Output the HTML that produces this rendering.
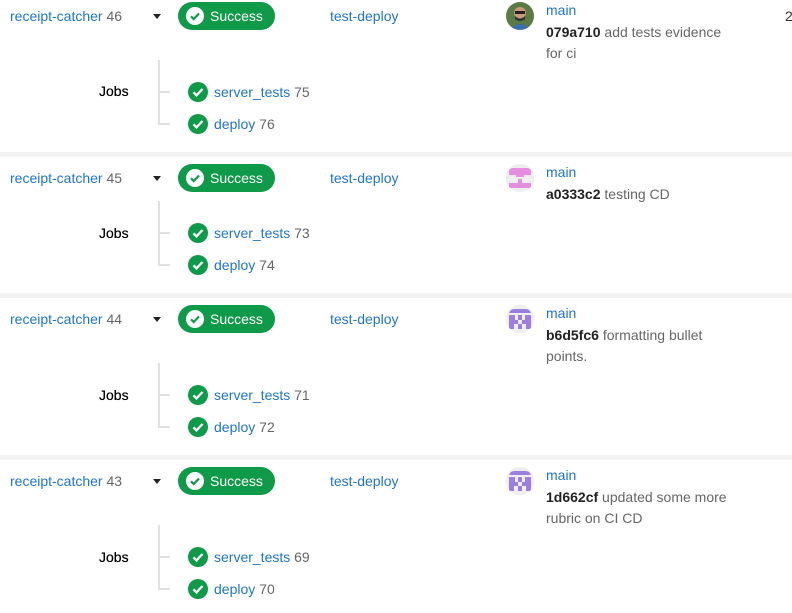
<!DOCTYPE html>
<html><head><meta charset="utf-8"><style>
*{margin:0;padding:0;box-sizing:border-box}
body{width:792px;height:613px;overflow:hidden;background:#fff;font-family:"Liberation Sans",Arial,sans-serif;font-size:14px;color:#333;position:relative}
.a{position:absolute;white-space:nowrap;line-height:18px}
.l{color:#1f75cb}
.g{color:#666}
.sep{position:absolute;left:0;width:792px;height:5px;background:#f2f2f2}
.pill{position:absolute;left:178px;width:97px;height:28px;border-radius:14px;background:#0f9a4a;color:#fff;font-size:14px;line-height:28px;padding-left:32px}
.pill svg{position:absolute;left:8px;top:5px}
.vl{position:absolute;left:158px;width:2px;background:#e0e0e0}
.hl{position:absolute;left:158px;width:12px;height:2px;background:#e0e0e0}
.ji{position:absolute;left:188px}
.av{position:absolute;left:506px;width:28px;height:28px;border-radius:50%;overflow:hidden;background:#eee}
.b{color:#222;font-weight:bold}
.car{position:absolute;left:153px;width:0;height:0;border-left:4.5px solid transparent;border-right:4.5px solid transparent;border-top:5px solid #222}
.jobs{color:#000;text-shadow:0 0 0.4px #000}
</style></head><body>

<div class="a" style="left:785px;top:7px;color:#333">2</div>

<div class="a" style="left:10px;top:7px"><span class="l">receipt-catcher</span> <span class="g">46</span></div>
<div class="car" style="top:14px"></div>
<div class="pill" style="top:2px"><svg width="18" height="18" viewBox="0 0 18 18"><circle cx="9" cy="9" r="9" fill="#fff"/><path d="M5 9.3l2.7 2.7L13 6.5" stroke="#0f9a4a" stroke-width="2.2" fill="none"/></svg>Success</div>
<div class="a l" style="left:330px;top:7px">test-deploy</div>
<div class="av" style="top:2px"><svg width="28" height="28"><rect width="28" height="28" fill="#5b7a45"/><circle cx="14" cy="11" r="6" fill="#c99a7a"/><rect x="9" y="9" width="10" height="3" fill="#222"/><path d="M4 28q10-12 20 0z" fill="#3a6fb0"/><path d="M9 14q5 5 10 0v3q-5 4-10 0z" fill="#333"/></svg></div>
<div class="a l" style="left:546px;top:1px">main</div>
<div class="a" style="left:546px;top:23px"><span class="b">079a710</span> <span class="g">add tests evidence</span></div>
<div class="a g" style="left:546px;top:44px">for ci</div>
<div class="a jobs" style="left:99px;top:82px">Jobs</div>
<div class="vl" style="top:60px;height:65px"></div>
<div class="hl" style="top:91px"></div><div class="hl" style="top:123px"></div>
<svg class="ji" style="top:82px" width="20" height="20"><circle cx="10" cy="10" r="10" fill="#0f9a4a"/><path d="M5.5 10.3l3 3L14.5 7" stroke="#fff" stroke-width="2.3" fill="none"/></svg>
<div class="a" style="left:214px;top:83px"><span class="l">server_tests</span> <span class="g">75</span></div>
<svg class="ji" style="top:114px" width="20" height="20"><circle cx="10" cy="10" r="10" fill="#0f9a4a"/><path d="M5.5 10.3l3 3L14.5 7" stroke="#fff" stroke-width="2.3" fill="none"/></svg>
<div class="a" style="left:214px;top:115px"><span class="l">deploy</span> <span class="g">76</span></div>

<div class="sep" style="top:152px"></div>

<div class="a" style="left:10px;top:169px"><span class="l">receipt-catcher</span> <span class="g">45</span></div>
<div class="car" style="top:176px"></div>
<div class="pill" style="top:164px"><svg width="18" height="18" viewBox="0 0 18 18"><circle cx="9" cy="9" r="9" fill="#fff"/><path d="M5 9.3l2.7 2.7L13 6.5" stroke="#0f9a4a" stroke-width="2.2" fill="none"/></svg>Success</div>
<div class="a l" style="left:330px;top:169px">test-deploy</div>
<div class="av" style="top:164px"><svg width="28" height="28"><rect width="28" height="28" fill="#eee"/><path d="M3 11v-3q0-4 4-4h14q4 0 4 4v3z" fill="#e58de0"/><rect x="10" y="11" width="8" height="2" fill="#e58de0"/><rect x="12" y="15" width="4" height="4" fill="#e58de0"/><rect x="3" y="19" width="22" height="5" fill="#e58de0"/></svg></div>
<div class="a l" style="left:546px;top:163px">main</div>
<div class="a" style="left:546px;top:185px"><span class="b">a0333c2</span> <span class="g">testing CD</span></div>
<div class="a jobs" style="left:99px;top:224px">Jobs</div>
<div class="vl" style="top:201px;height:64px"></div>
<div class="hl" style="top:232px"></div><div class="hl" style="top:264px"></div>
<svg class="ji" style="top:223px" width="20" height="20"><circle cx="10" cy="10" r="10" fill="#0f9a4a"/><path d="M5.5 10.3l3 3L14.5 7" stroke="#fff" stroke-width="2.3" fill="none"/></svg>
<div class="a" style="left:214px;top:224px"><span class="l">server_tests</span> <span class="g">73</span></div>
<svg class="ji" style="top:255px" width="20" height="20"><circle cx="10" cy="10" r="10" fill="#0f9a4a"/><path d="M5.5 10.3l3 3L14.5 7" stroke="#fff" stroke-width="2.3" fill="none"/></svg>
<div class="a" style="left:214px;top:256px"><span class="l">deploy</span> <span class="g">74</span></div>

<div class="sep" style="top:293px"></div>

<div class="a" style="left:10px;top:310px"><span class="l">receipt-catcher</span> <span class="g">44</span></div>
<div class="car" style="top:317px"></div>
<div class="pill" style="top:305px"><svg width="18" height="18" viewBox="0 0 18 18"><circle cx="9" cy="9" r="9" fill="#fff"/><path d="M5 9.3l2.7 2.7L13 6.5" stroke="#0f9a4a" stroke-width="2.2" fill="none"/></svg>Success</div>
<div class="a l" style="left:330px;top:310px">test-deploy</div>
<div class="av" style="top:305px"><svg width="28" height="28"><rect width="28" height="28" fill="#eee"/><path d="M3 24v-14q0-6 6-6h10q6 0 6 6v14z" fill="#9b7ee0"/><rect x="3" y="8" width="22" height="2" fill="#eee"/><rect x="9" y="10" width="3" height="5" fill="#eee"/><rect x="16" y="10" width="3" height="5" fill="#eee"/><rect x="12" y="15" width="4" height="4" fill="#eee"/><rect x="8" y="19" width="4" height="5" fill="#eee"/><rect x="16" y="19" width="4" height="5" fill="#eee"/></svg></div>
<div class="a l" style="left:546px;top:304px">main</div>
<div class="a" style="left:546px;top:326px"><span class="b">b6d5fc6</span> <span class="g">formatting bullet</span></div>
<div class="a g" style="left:546px;top:347px">points.</div>
<div class="a jobs" style="left:99px;top:386px">Jobs</div>
<div class="vl" style="top:363px;height:65px"></div>
<div class="hl" style="top:394px"></div><div class="hl" style="top:426px"></div>
<svg class="ji" style="top:385px" width="20" height="20"><circle cx="10" cy="10" r="10" fill="#0f9a4a"/><path d="M5.5 10.3l3 3L14.5 7" stroke="#fff" stroke-width="2.3" fill="none"/></svg>
<div class="a" style="left:214px;top:386px"><span class="l">server_tests</span> <span class="g">71</span></div>
<svg class="ji" style="top:417px" width="20" height="20"><circle cx="10" cy="10" r="10" fill="#0f9a4a"/><path d="M5.5 10.3l3 3L14.5 7" stroke="#fff" stroke-width="2.3" fill="none"/></svg>
<div class="a" style="left:214px;top:418px"><span class="l">deploy</span> <span class="g">72</span></div>

<div class="sep" style="top:455px"></div>

<div class="a" style="left:10px;top:472px"><span class="l">receipt-catcher</span> <span class="g">43</span></div>
<div class="car" style="top:479px"></div>
<div class="pill" style="top:467px"><svg width="18" height="18" viewBox="0 0 18 18"><circle cx="9" cy="9" r="9" fill="#fff"/><path d="M5 9.3l2.7 2.7L13 6.5" stroke="#0f9a4a" stroke-width="2.2" fill="none"/></svg>Success</div>
<div class="a l" style="left:330px;top:472px">test-deploy</div>
<div class="av" style="top:467px"><svg width="28" height="28"><rect width="28" height="28" fill="#eee"/><path d="M3 24v-14q0-6 6-6h10q6 0 6 6v14z" fill="#9b7ee0"/><rect x="3" y="8" width="22" height="2" fill="#eee"/><rect x="9" y="10" width="3" height="5" fill="#eee"/><rect x="16" y="10" width="3" height="5" fill="#eee"/><rect x="12" y="15" width="4" height="4" fill="#eee"/><rect x="8" y="19" width="4" height="5" fill="#eee"/><rect x="16" y="19" width="4" height="5" fill="#eee"/></svg></div>
<div class="a l" style="left:546px;top:466px">main</div>
<div class="a" style="left:546px;top:488px"><span class="b">1d662cf</span> <span class="g">updated some more</span></div>
<div class="a g" style="left:546px;top:509px">rubric on CI CD</div>
<div class="a jobs" style="left:99px;top:548px">Jobs</div>
<div class="vl" style="top:525px;height:65px"></div>
<div class="hl" style="top:556px"></div><div class="hl" style="top:588px"></div>
<svg class="ji" style="top:547px" width="20" height="20"><circle cx="10" cy="10" r="10" fill="#0f9a4a"/><path d="M5.5 10.3l3 3L14.5 7" stroke="#fff" stroke-width="2.3" fill="none"/></svg>
<div class="a" style="left:214px;top:548px"><span class="l">server_tests</span> <span class="g">69</span></div>
<svg class="ji" style="top:579px" width="20" height="20"><circle cx="10" cy="10" r="10" fill="#0f9a4a"/><path d="M5.5 10.3l3 3L14.5 7" stroke="#fff" stroke-width="2.3" fill="none"/></svg>
<div class="a" style="left:214px;top:580px"><span class="l">deploy</span> <span class="g">70</span></div>

</body></html>
